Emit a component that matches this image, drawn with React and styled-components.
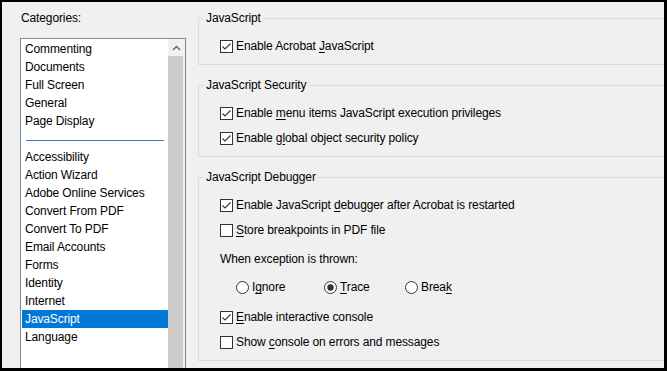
import React from 'react';
import styled, { createGlobalStyle } from 'styled-components';

const Global = createGlobalStyle`
  html, body { margin: 0; padding: 0; background: #f0f0f0; }
  body {
    font-family: "Liberation Sans", Arial, sans-serif;
    font-size: 12px;
    letter-spacing: -0.12px;
    color: #000;
  }
  * { box-sizing: border-box; }
`;

const Frame = styled.div`
  width: 667px;
  height: 371px;
  border-style: solid;
  border-color: #000;
  border-width: 2px 3px 3px 2px;
  background: #f0f0f0;
  display: flex;
  overflow: hidden;
`;

const LeftPane = styled.div`
  flex: none;
  width: 166px;
  margin-left: 18px;
  padding-top: 8px;
  display: flex;
  flex-direction: column;
`;

const PaneLabel = styled.div`
  line-height: 16px;
  padding-left: 1px;
  margin-bottom: 12px;
`;

const ListBox = styled.div`
  flex: none;
  height: 350px;
  border: 1px solid #828790;
  background: #fff;
  display: flex;
`;

const List = styled.div`
  flex: 1;
  padding: 1px 0 0 1px;
  display: flex;
  flex-direction: column;
`;

const Item = styled.div`
  height: 18px;
  line-height: 18px;
  padding-left: 3px;
  white-space: nowrap;
  background: ${p => (p.$selected ? '#0078d7' : 'transparent')};
  color: ${p => (p.$selected ? '#fff' : '#000')};
`;

const Separator = styled.div`
  height: 18px;
  padding: 10px 4px 0 4px;
  &::after {
    content: '';
    display: block;
    height: 1px;
    background: #2b7bd0;
  }
`;

const ScrollBar = styled.div`
  flex: none;
  width: 17px;
  background: #f0f0f0;
  display: flex;
  flex-direction: column;
`;

const ArrowButton = styled.div`
  height: 17px;
  display: flex;
  align-items: center;
  justify-content: center;
`;

const Thumb = styled.div`
  flex: 1;
  background: #cdcdcd;
  margin-right: 2px;
`;

const RightPane = styled.div`
  flex: 1;
  min-width: 0;
  margin-left: 12px;
  padding-top: 8px;
  display: flex;
  flex-direction: column;
  gap: 12px;
`;

const Group = styled.fieldset`
  margin: 0;
  min-width: 0;
  border: 1px solid #dcdcdc;
  border-right: none;
  padding: 11px 0 9px 0;
`;

const Legend = styled.legend`
  margin-left: 5px;
  padding: 0 2px;
  line-height: 16px;
`;

const GroupBody = styled.div`
  padding-left: 21px;
  display: flex;
  flex-direction: column;
  gap: ${p => p.$gap || 0}px;
`;

const Row = styled.div`
  height: 18px;
  display: flex;
  align-items: center;
  gap: 3px;
  white-space: nowrap;
  margin-top: ${p => p.$top || 0}px;
`;

const RadioRow = styled.div`
  height: 18px;
  display: flex;
  align-items: center;
  white-space: nowrap;
  margin-top: ${p => p.$top || 0}px;
  padding-left: 16px;
`;

const Text = styled.span`
  line-height: 18px;
  u {
    text-decoration: underline;
    text-underline-offset: 2px;
    text-decoration-thickness: 1px;
  }
`;

const RadioOption = styled.div`
  flex: none;
  display: flex;
  align-items: center;
  gap: 3px;
  width: ${p => (p.$width ? `${p.$width}px` : 'auto')};
`;

const BoxSvg = styled.svg`
  flex: none;
  display: block;
`;

function CheckBox({ checked }) {
  return (
    <BoxSvg width="13" height="13" viewBox="0 0 13 13">
      <rect x="0.5" y="0.5" width="12" height="12" fill="#fff" stroke="#333" />
      {checked && (
        <polyline
          points="2.5,6.5 5,9 10.5,3.5"
          fill="none"
          stroke="#333"
          strokeWidth="1.1"
        />
      )}
    </BoxSvg>
  );
}

function Radio({ checked }) {
  return (
    <BoxSvg width="13" height="13" viewBox="0 0 13 13">
      <circle cx="6.5" cy="6.5" r="6" fill="#fff" stroke="#333" />
      {checked && <circle cx="6.5" cy="6.5" r="3.2" fill="#333" />}
    </BoxSvg>
  );
}

function Check({ checked, children, top }) {
  return (
    <Row $top={top}>
      <CheckBox checked={checked} />
      <Text>{children}</Text>
    </Row>
  );
}

const firstItems = ['Commenting', 'Documents', 'Full Screen', 'General', 'Page Display'];
const restItems = [
  'Accessibility',
  'Action Wizard',
  'Adobe Online Services',
  'Convert From PDF',
  'Convert To PDF',
  'Email Accounts',
  'Forms',
  'Identity',
  'Internet',
  'JavaScript',
  'Language',
];

export default function App() {
  return (
    <>
      <Global />
      <Frame>
        <LeftPane>
          <PaneLabel>Categories:</PaneLabel>
          <ListBox>
            <List>
              {firstItems.map(t => (
                <Item key={t}>{t}</Item>
              ))}
              <Separator />
              {restItems.map(t => (
                <Item key={t} $selected={t === 'JavaScript'}>
                  {t}
                </Item>
              ))}
            </List>
            <ScrollBar>
              <ArrowButton>
                <svg width="9" height="6" viewBox="0 0 9 6">
                  <polyline points="1,5 4.5,1.5 8,5" fill="none" stroke="#606060" strokeWidth="1.4" />
                </svg>
              </ArrowButton>
              <Thumb />
            </ScrollBar>
          </ListBox>
        </LeftPane>
        <RightPane>
          <Group>
            <Legend>JavaScript</Legend>
            <GroupBody>
              <Check checked>
                Enable Acrobat <u>J</u>avaScript
              </Check>
            </GroupBody>
          </Group>
          <Group>
            <Legend>JavaScript Security</Legend>
            <GroupBody $gap={7}>
              <Check checked>
                Enable <u>m</u>enu items JavaScript execution privileges
              </Check>
              <Check checked>
                Enable g<u>l</u>obal object security policy
              </Check>
            </GroupBody>
          </Group>
          <Group>
            <Legend>JavaScript Debugger</Legend>
            <GroupBody>
              <Check checked>
                Enable JavaScript <u>d</u>ebugger after Acrobat is restarted
              </Check>
              <Check top={7}>
                <u>S</u>tore breakpoints in PDF file
              </Check>
              <Row $top={11}>
                <Text>When exception is thrown:</Text>
              </Row>
              <RadioRow $top={10}>
                <RadioOption $width={88}>
                  <Radio />
                  <Text>
                    I<u>g</u>nore
                  </Text>
                </RadioOption>
                <RadioOption $width={81}>
                  <Radio checked />
                  <Text>
                    <u>T</u>race
                  </Text>
                </RadioOption>
                <RadioOption>
                  <Radio />
                  <Text>
                    Brea<u>k</u>
                  </Text>
                </RadioOption>
              </RadioRow>
              <Check checked top={12}>
                <u>E</u>nable interactive console
              </Check>
              <Check top={7}>
                Show <u>c</u>onsole on errors and messages
              </Check>
            </GroupBody>
          </Group>
        </RightPane>
      </Frame>
    </>
  );
}
